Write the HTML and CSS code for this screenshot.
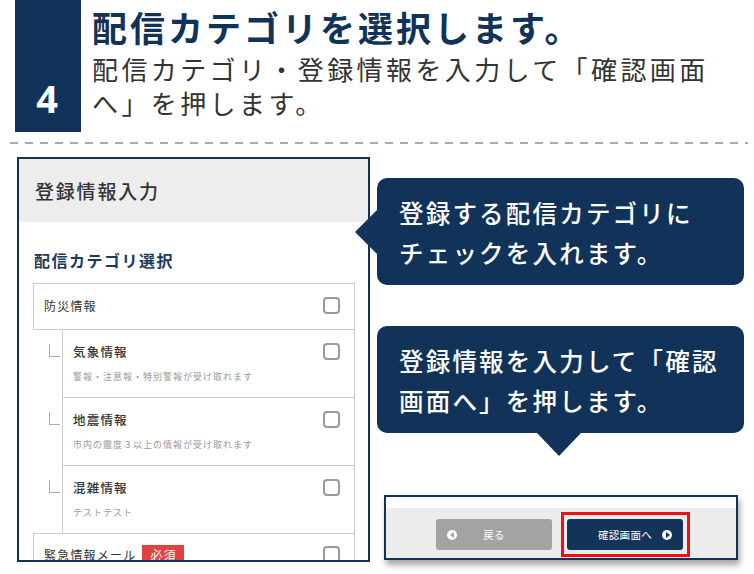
FILE: index.html
```html
<!DOCTYPE html>
<html lang="ja">
<head>
<meta charset="utf-8">
<link rel="stylesheet" href="styles.css">
</head>
<body>
<header class="step">
  <div class="step-num">4</div>
  <div class="step-text">
    <h1 class="step-title">配信カテゴリを選択します。</h1>
    <p class="step-sub">配信カテゴリ・登録情報を入力して「確認画面<br>へ」を押します。</p>
  </div>
</header>
<div class="sep"></div>
<main class="main">
  <section class="panel">
    <div class="panel-head">登録情報入力</div>
    <h2 class="panel-title">配信カテゴリ選択</h2>
    <div class="cats">
      <div class="cat">
        <span class="cat-name">防災情報</span>
        <span class="check"></span>
      </div>
      <div class="sub">
        <span class="conn"></span>
        <div class="sub-box">
          <div class="sub-text">
            <div class="sub-name">気象情報</div>
            <div class="sub-desc">警報・注意報・特別警報が受け取れます</div>
          </div>
          <span class="check"></span>
        </div>
      </div>
      <div class="sub">
        <span class="conn"></span>
        <div class="sub-box">
          <div class="sub-text">
            <div class="sub-name">地震情報</div>
            <div class="sub-desc">市内の震度３以上の情報が受け取れます</div>
          </div>
          <span class="check"></span>
        </div>
      </div>
      <div class="sub sub-last">
        <span class="conn"></span>
        <div class="sub-box">
          <div class="sub-text">
            <div class="sub-name">混雑情報</div>
            <div class="sub-desc">テストテスト</div>
          </div>
          <span class="check"></span>
        </div>
      </div>
      <div class="cat cat-2">
        <span class="cat-name">緊急情報メール<span class="badge">必須</span></span>
        <span class="check"></span>
      </div>
    </div>
  </section>
  <aside class="side">
    <div class="bubble bubble-left">登録する配信カテゴリに<br>チェックを入れます。</div>
    <div class="bubble bubble-down">登録情報を入力して「確認<br>画面へ」を押します。</div>
    <div class="shot">
      <div class="shot-top"></div>
      <div class="shot-bar">
        <div class="btn btn-back">
          <span class="ico ico-left"></span>
          <span class="btn-label">戻る</span>
          <span></span>
        </div>
        <div class="highlight">
          <div class="btn btn-next">
            <span></span>
            <span class="btn-label">確認画面へ</span>
            <span class="ico ico-right"></span>
          </div>
        </div>
      </div>
    </div>
  </aside>
</main>
</body>
</html>
```
FILE: styles.css
```css
* { box-sizing: border-box; }
html, body { margin: 0; padding: 0; background: #fff; }
body {
  font-family: "Noto Sans CJK JP", "Noto Sans", sans-serif;
  color: #333;
  width: 754px;
  height: 574px;
  overflow: hidden;
}

.step {
  display: flex;
  height: 132px;
}
.step-num {
  width: 66px;
  margin-left: 15px;
  height: 132px;
  background: #113359;
  color: #fff;
  font-family: "Noto Sans", "Liberation Sans", sans-serif;
  font-weight: 700;
  font-size: 38px;
  line-height: 40px;
  display: flex;
  align-items: flex-end;
  justify-content: center;
  padding-bottom: 14px;
  padding-right: 2px;
}
.step-text {
  margin-left: 11px;
}
.step-title {
  margin: 4px 0 0;
  font-size: 35px;
  line-height: 45px;
  letter-spacing: 3px;
  font-weight: 700;
  color: #113359;
}
.step-sub {
  margin: 3px 0 0;
  font-size: 26px;
  line-height: 34px;
  letter-spacing: 3.4px;
  color: #333;
}

.sep {
  height: 2px;
  margin: 10px 6px 0 10px;
  background: repeating-linear-gradient(to right, #aaa 0 8px, transparent 8px 15px);
}

.main {
  display: flex;
  margin-top: 13px;
}

.panel {
  width: 353px;
  height: 405px;
  margin-left: 17px;
  border: 2px solid #113359;
  overflow: hidden;
  background: #fff;
}
.panel-head {
  height: 63px;
  background: #ededed;
  padding-left: 16px;
  font-size: 19px;
  letter-spacing: 1.8px;
  line-height: 63px;
  font-weight: 500;
  color: #333;
}
.panel-title {
  margin: 26px 0 0 15px;
  font-size: 16px;
  line-height: 24px;
  letter-spacing: 1.5px;
  font-weight: 700;
  color: #1d3a5e;
}
.cats {
  margin: 11px 13px 0 14px;
}
.cat {
  display: flex;
  align-items: center;
  justify-content: space-between;
  border: 1px solid #ccc;
  padding: 11px 14px 13px 10px;
  font-size: 12px;
  letter-spacing: 1.2px;
  line-height: 21px;
  color: #333;
}
.cat-2 {
  padding-top: 10px;
}
.cat-name {
  display: flex;
  align-items: center;
}
.badge {
  display: inline-block;
  margin-left: 6px;
  background: #e04242;
  color: #fff;
  font-size: 12px;
  line-height: 20px;
  padding: 0 8px;
  letter-spacing: 1px;
}
.check {
  width: 17px;
  height: 17px;
  border: 2px solid #9a9a9a;
  border-radius: 4px;
  background: #fff;
  flex: none;
}
.sub {
  display: grid;
  grid-template-columns: 29px 1fr;
}
.conn {
  width: 11px;
  height: 13px;
  margin: 14px 0 0 16px;
  border-left: 1px solid #aaa;
  border-bottom: 1px solid #aaa;
}
.sub-box {
  display: flex;
  justify-content: space-between;
  align-items: flex-start;
  border-left: 1px solid #ccc;
  border-right: 1px solid #ccc;
  border-bottom: 1px solid #ccc;
  padding: 12px 14px 13px 10px;
}
.sub-last .sub-box {
  border-bottom: none;
  padding-bottom: 13px;
}
.sub-name {
  font-size: 12.5px;
  line-height: 20px;
  letter-spacing: 1.2px;
  font-weight: 500;
  color: #333;
}
.sub-desc {
  margin-top: 8px;
  font-size: 9px;
  line-height: 14px;
  letter-spacing: 1px;
  color: #999;
}
.sub-box .check {
  margin-top: 1px;
}

.side {
  margin-left: 7px;
  padding-top: 21px;
}
.bubble {
  position: relative;
  width: 367px;
  height: 107px;
  background: #113359;
  color: #fff;
  border-radius: 10px;
  padding: 15px 10px 12px 22px;
  font-size: 24.5px;
  line-height: 40px;
  letter-spacing: 2.2px;
  font-weight: 500;
}
.bubble-left::before {
  content: "";
  position: absolute;
  left: -22px;
  top: 32px;
  border-right: 22px solid #113359;
  border-top: 22px solid transparent;
  border-bottom: 22px solid transparent;
}
.bubble-down {
  margin-top: 41px;
}
.bubble-down::after {
  content: "";
  position: absolute;
  left: 160px;
  bottom: -23px;
  border-top: 23px solid #113359;
  border-left: 22px solid transparent;
  border-right: 22px solid transparent;
}

.shot {
  width: 354px;
  margin: 62px 0 0 7px;
  border: 2px solid #113359;
  box-shadow: 2px 5px 6px rgba(0, 0, 0, 0.35);
  background: #fff;
}
.shot-top {
  height: 11px;
  background: #fff;
}
.shot-bar {
  height: 50px;
  background: #ececec;
  display: flex;
  align-items: center;
  padding: 3px 0 0 50px;
}
.btn {
  width: 116px;
  height: 31px;
  border-radius: 3px;
  display: grid;
  grid-template-columns: 10px 1fr 10px;
  align-items: center;
  padding: 0 11px;
  color: #fff;
  font-size: 10.5px;
  letter-spacing: 0.3px;
}
.btn-label {
  text-align: center;
}
.btn-back {
  background: #a3a3a3;
}
.btn-next {
  background: #133459;
}
.highlight {
  margin-left: 9px;
  border: 3px solid #ee1111;
  padding: 4px 4px 4px 3px;
}
.ico {
  width: 10px;
  height: 10px;
  border-radius: 50%;
  background: #fff;
  display: flex;
  align-items: center;
  justify-content: center;
}
.ico-left::before {
  content: "";
  margin-left: -1px;
  border-right: 4px solid #a3a3a3;
  border-top: 3px solid transparent;
  border-bottom: 3px solid transparent;
}
.ico-right::before {
  content: "";
  margin-left: 1px;
  border-left: 4px solid #133459;
  border-top: 3px solid transparent;
  border-bottom: 3px solid transparent;
}
```
